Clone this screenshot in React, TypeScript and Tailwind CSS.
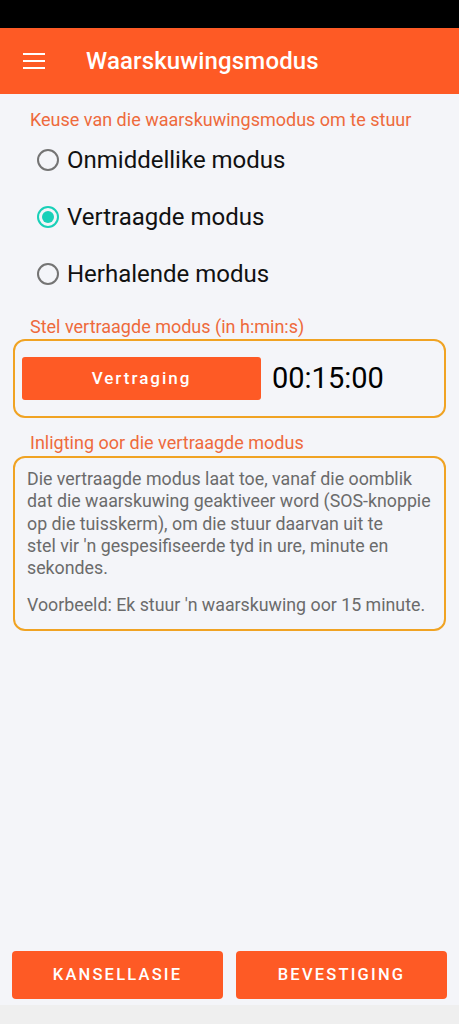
import React from "react";

const modes = ["Onmiddellike modus", "Vertraagde modus", "Herhalende modus"];

function Radio({ checked }: { checked: boolean }) {
  return checked ? (
    <span className="w-[22px] h-[22px] rounded-full border-2 border-[#19d0b8] flex items-center justify-center">
      <span className="w-[12px] h-[12px] rounded-full bg-[#19d0b8]" />
    </span>
  ) : (
    <span className="w-[22px] h-[22px] rounded-full border-2 border-[#747474]" />
  );
}

export default function App() {
  return (
    <div
      className="h-[1024px] flex flex-col bg-[#f4f5f9] overflow-hidden"
      style={{ fontFamily: "Roboto, 'Noto Sans', sans-serif" }}
    >
      <div className="h-[28px] bg-black shrink-0" />
      <header className="h-[66px] bg-[#fe5a25] flex items-center shrink-0">
        <svg width="24" height="24" viewBox="0 0 24 24" className="ml-[22px]">
          <path d="M1 5h22M1 12h22M1 19h22" stroke="white" strokeWidth="2.2" />
        </svg>
        <h1 className="ml-[40px] text-white text-[24px] font-medium tracking-[0.15px]">
          Waarskuwingsmodus
        </h1>
      </header>

      <main className="flex-1 flex flex-col">
        <p className="mt-[14px] ml-[30px] text-[#ee6a3c] text-[18px] leading-[24px]">
          Keuse van die waarskuwingsmodus om te stuur
        </p>
        <div className="flex flex-col mt-[14px] gap-[29px] ml-[37px]">
          {modes.map((m, i) => (
            <label key={m} className="flex items-center gap-[8px] h-[28px]">
              <Radio checked={i === 1} />
              <span className="text-[24px] leading-[28px] text-[#111]">{m}</span>
            </label>
          ))}
        </div>

        <p className="mt-[27px] ml-[30px] text-[#ee6a3c] text-[18px] leading-[24px]">
          Stel vertraagde modus (in h:min:s)
        </p>
        <div className="mx-[13px] h-[79px] border-2 border-[#f0a323] rounded-[12px] flex items-center pl-[7px]">
          <button className="w-[239px] h-[43px] bg-[#fe5a25] rounded-[3px] text-white text-[17px] font-medium tracking-[2px]">
            Vertraging
          </button>
          <span className="ml-[11px] text-[29px] text-black">00:15:00</span>
        </div>

        <p className="mt-[13px] ml-[30px] text-[#ee6a3c] text-[18px] leading-[24px]">
          Inligting oor die vertraagde modus
        </p>
        <div className="mx-[13px] mt-[1px] border-2 border-[#f0a323] rounded-[12px] pl-[12px] pr-[4px] pt-[10px] pb-[12px] text-[17.8px] leading-[22.3px] text-[#6b6b6b] whitespace-nowrap">
          <p>
            Die vertraagde modus laat toe, vanaf die oomblik
            <br />
            dat die waarskuwing geaktiveer word (SOS-knoppie
            <br />
            op die tuisskerm), om die stuur daarvan uit te
            <br />
            stel vir 'n gespesifiseerde tyd in ure, minute en
            <br />
            sekondes.
          </p>
          <p className="mt-[15px]">Voorbeeld: Ek stuur 'n waarskuwing oor 15 minute.</p>
        </div>

        <div className="mt-auto flex gap-[13px] px-[12px] pb-[6px]">
          <button className="flex-1 h-[48px] bg-[#fe5a25] rounded-[4px] text-white text-[16.5px] font-medium tracking-[2.2px]">
            KANSELLASIE
          </button>
          <button className="flex-1 h-[48px] bg-[#fe5a25] rounded-[4px] text-white text-[16.5px] font-medium tracking-[2.2px]">
            BEVESTIGING
          </button>
        </div>
      </main>
      <div className="h-[19px] bg-[#efefef] shrink-0" />
    </div>
  );
}
